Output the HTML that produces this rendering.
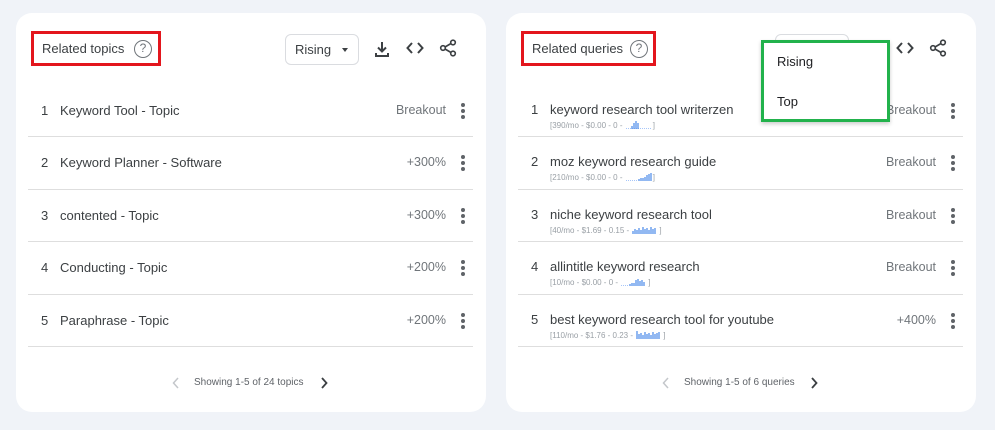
<!DOCTYPE html>
<html><head><meta charset="utf-8"><style>
*{margin:0;padding:0;box-sizing:border-box}
body{width:995px;height:430px;background:#f0f3f8;font-family:"Liberation Sans",Arial,sans-serif;position:relative;overflow:hidden;color:#3c4043}
.card{position:absolute;top:13px;width:470px;height:399px;background:#fff;border-radius:16px}
.a{position:absolute}
.red{border:3px solid #e3161d}
.title{font-size:13px;color:#3c4043}
.q{width:18px;height:18px;border:1.5px solid #70757a;border-radius:50%;font-size:12px;color:#70757a;text-align:center;line-height:15px}
.dd{border:1px solid #dadce0;border-radius:6px;height:31px;font-size:13px;color:#3c4043}
.row{position:absolute;left:12px;width:445px;height:52.5px;border-bottom:1px solid #dedede}
.n{position:absolute;left:13px;font-size:13px;color:#3c4043}
.t{position:absolute;left:32px;font-size:13px;color:#3c4043}
.v{position:absolute;right:27px;font-size:12.5px;color:#70757a}
.dots{position:absolute;right:8px;width:4px}
.dots i{display:block;width:4px;height:4px;border-radius:50%;background:#5f6368;margin-bottom:2px}
.s{position:absolute;left:32px;font-size:8px;color:#9aa0a6;white-space:nowrap;line-height:9px}
.s svg{vertical-align:-1px}
.foot{font-size:10px;color:#5f6368}
</style></head><body>

<div class="card" style="left:16px"></div>
<div class="card" style="left:506px"></div>

<div class="a red" style="left:31px;top:31px;width:130px;height:35px"></div>
<div class="a title" style="left:42px;top:41px">Related topics</div>
<div class="a q" style="left:134px;top:40px">?</div>
<div class="a dd" style="left:285px;top:34px;width:74px"><span class="a" style="left:9px;top:7px">Rising</span><span class="a" style="left:56px;top:13px;width:0;height:0;border-left:3.5px solid transparent;border-right:3.5px solid transparent;border-top:4px solid #3c4043"></span></div>
<svg class="a" style="left:373px;top:40px" width="18" height="18" viewBox="0 0 18 18"><path d="M9 2v9M5 7.5l4 4 4-4M3 13v3h12v-3" fill="none" stroke="#3c4043" stroke-width="2"/></svg>
<svg class="a" style="left:406px;top:41px" width="18" height="14" viewBox="0 0 18 14"><path d="M6 2L1.5 7 6 12M12 2l4.5 5L12 12" fill="none" stroke="#3c4043" stroke-width="2"/></svg>
<svg class="a" style="left:439px;top:39px" width="18" height="18" viewBox="0 0 18 18"><circle cx="14" cy="3.5" r="2.3" fill="none" stroke="#3c4043" stroke-width="1.6"/><circle cx="4" cy="9" r="2.3" fill="none" stroke="#3c4043" stroke-width="1.6"/><circle cx="14" cy="14.5" r="2.3" fill="none" stroke="#3c4043" stroke-width="1.6"/><path d="M6 8l6-3.5M6 10l6 3.5" stroke="#3c4043" stroke-width="1.6"/></svg>

<div style="position:absolute;left:16px;top:0">
<div class="row" style="top:84.5px"><span class="n" style="top:18px">1</span><span class="t" style="top:18px">Keyword Tool - Topic</span><span class="v" style="top:18px">Breakout</span><span class="dots" style="top:18px"><i></i><i></i><i></i></span></div>
<div class="row" style="top:137px"><span class="n" style="top:18px">2</span><span class="t" style="top:18px">Keyword Planner - Software</span><span class="v" style="top:18px">+300%</span><span class="dots" style="top:18px"><i></i><i></i><i></i></span></div>
<div class="row" style="top:189.5px"><span class="n" style="top:18px">3</span><span class="t" style="top:18px">contented - Topic</span><span class="v" style="top:18px">+300%</span><span class="dots" style="top:18px"><i></i><i></i><i></i></span></div>
<div class="row" style="top:242px"><span class="n" style="top:18px">4</span><span class="t" style="top:18px">Conducting - Topic</span><span class="v" style="top:18px">+200%</span><span class="dots" style="top:18px"><i></i><i></i><i></i></span></div>
<div class="row" style="top:294.5px"><span class="n" style="top:18px">5</span><span class="t" style="top:18px">Paraphrase - Topic</span><span class="v" style="top:18px">+200%</span><span class="dots" style="top:18px"><i></i><i></i><i></i></span></div>
</div>
<svg class="a" style="left:172px;top:377px" width="8" height="12"><path d="M6 1L1.5 6 6 11" fill="none" stroke="#c4c7cb" stroke-width="1.5"/></svg>
<div class="a foot" style="left:194px;top:377px">Showing 1-5 of 24 topics</div>
<svg class="a" style="left:320px;top:377px" width="8" height="12"><path d="M2 1l4.5 5L2 11" fill="none" stroke="#3c4043" stroke-width="1.8"/></svg>

<div class="a red" style="left:521px;top:31px;width:135px;height:35px"></div>
<div class="a title" style="left:532px;top:41px">Related queries</div>
<div class="a q" style="left:630px;top:40px">?</div>
<div class="a dd" style="left:775px;top:34px;width:74px"></div>
<svg class="a" style="left:896px;top:41px" width="18" height="14" viewBox="0 0 18 14"><path d="M6 2L1.5 7 6 12M12 2l4.5 5L12 12" fill="none" stroke="#3c4043" stroke-width="2"/></svg>
<svg class="a" style="left:929px;top:39px" width="18" height="18" viewBox="0 0 18 18"><circle cx="14" cy="3.5" r="2.3" fill="none" stroke="#3c4043" stroke-width="1.6"/><circle cx="4" cy="9" r="2.3" fill="none" stroke="#3c4043" stroke-width="1.6"/><circle cx="14" cy="14.5" r="2.3" fill="none" stroke="#3c4043" stroke-width="1.6"/><path d="M6 8l6-3.5M6 10l6 3.5" stroke="#3c4043" stroke-width="1.6"/></svg>

<div style="position:absolute;left:506px;top:0">
<div class="row" style="top:84.5px"><span class="n" style="top:17px">1</span><span class="t" style="top:17px">keyword research tool writerzen</span><span class="s" style="top:35px">[390/mo - $0.00 - 0 - <svg width="28" height="9"><path d="M1 8.5h26" stroke="#8ab4f8" stroke-width="0.8" stroke-dasharray="1 1"/><path d="M7 9V6M9 9V3M11 9V1M13 9V3" stroke="#4a8ae8" stroke-width="1.2"/></svg>]</span><span class="v" style="top:18px">Breakout</span><span class="dots" style="top:18px"><i></i><i></i><i></i></span></div>
<div class="row" style="top:137px"><span class="n" style="top:17px">2</span><span class="t" style="top:17px">moz keyword research guide</span><span class="s" style="top:35px">[210/mo - $0.00 - 0 - <svg width="28" height="9"><path d="M1 8.5h12" stroke="#8ab4f8" stroke-width="0.8" stroke-dasharray="1 1"/><path d="M14 9V7M16 9V6M18 9V6M20 9V5M22 9V3M24 9V2M26 9V1" stroke="#4a8ae8" stroke-width="1.2"/></svg>]</span><span class="v" style="top:18px">Breakout</span><span class="dots" style="top:18px"><i></i><i></i><i></i></span></div>
<div class="row" style="top:189.5px"><span class="n" style="top:17px">3</span><span class="t" style="top:17px">niche keyword research tool</span><span class="s" style="top:35px">[40/mo - $1.69 - 0.15 - <svg width="28" height="9"><path d="M2 9V6M4 9V4M6 9V5M8 9V3M10 9V5M12 9V2M14 9V4M16 9V3M18 9V5M20 9V2M22 9V4M24 9V3" stroke="#4a8ae8" stroke-width="1.2"/></svg>]</span><span class="v" style="top:18px">Breakout</span><span class="dots" style="top:18px"><i></i><i></i><i></i></span></div>
<div class="row" style="top:242px"><span class="n" style="top:17px">4</span><span class="t" style="top:17px">allintitle keyword research</span><span class="s" style="top:35px">[10/mo - $0.00 - 0 - <svg width="28" height="9"><path d="M1 8.5h8" stroke="#8ab4f8" stroke-width="0.8" stroke-dasharray="1 1"/><path d="M10 9V7M12 9V6M14 9V6M16 9V3M18 9V2M20 9V4M22 9V3M24 9V5" stroke="#4a8ae8" stroke-width="1.2"/></svg>]</span><span class="v" style="top:18px">Breakout</span><span class="dots" style="top:18px"><i></i><i></i><i></i></span></div>
<div class="row" style="top:294.5px"><span class="n" style="top:17px">5</span><span class="t" style="top:17px">best keyword research tool for youtube</span><span class="s" style="top:35px">[110/mo - $1.76 - 0.23 - <svg width="28" height="9"><path d="M2 9V1M4 9V4M6 9V3M8 9V5M10 9V2M12 9V4M14 9V3M16 9V5M18 9V2M20 9V4M22 9V3M24 9V2" stroke="#4a8ae8" stroke-width="1.2"/></svg>]</span><span class="v" style="top:18px">+400%</span><span class="dots" style="top:18px"><i></i><i></i><i></i></span></div>
</div>
<svg class="a" style="left:662px;top:377px" width="8" height="12"><path d="M6 1L1.5 6 6 11" fill="none" stroke="#c4c7cb" stroke-width="1.5"/></svg>
<div class="a foot" style="left:684px;top:377px">Showing 1-5 of 6 queries</div>
<svg class="a" style="left:810px;top:377px" width="8" height="12"><path d="M2 1l4.5 5L2 11" fill="none" stroke="#3c4043" stroke-width="1.8"/></svg>

<div class="a" style="left:761px;top:40px;width:129px;height:82px;background:#fff;border:3px solid #22b24c;box-shadow:0 2px 4px rgba(0,0,0,.2)"></div>
<div class="a" style="left:777px;top:54px;font-size:13px;color:#202124">Rising</div>
<div class="a" style="left:777px;top:94px;font-size:13px;color:#202124">Top</div>
</body></html>
